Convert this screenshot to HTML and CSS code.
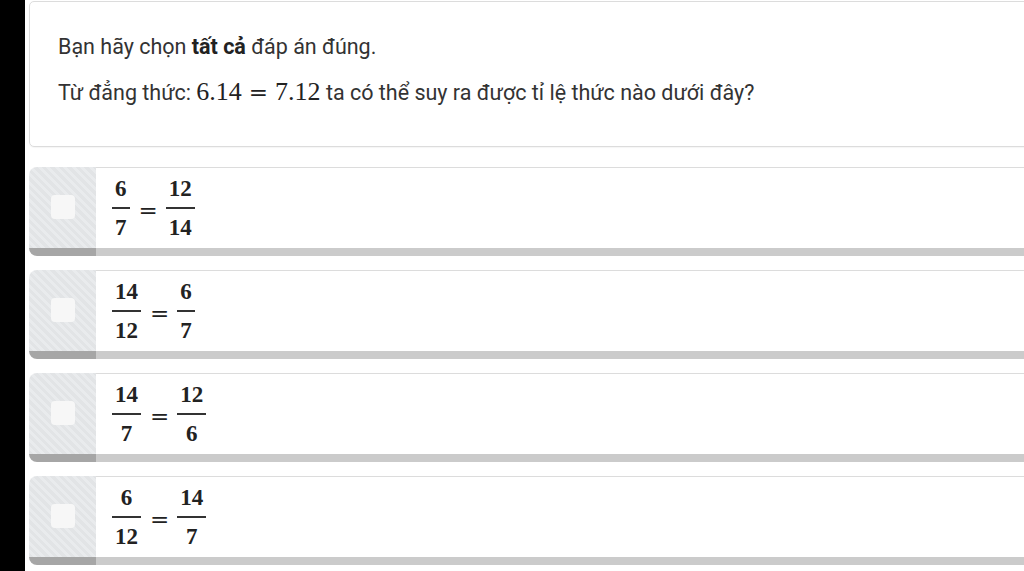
FILE: index.html
```html
<!DOCTYPE html>
<html lang="vi">
<head>
<meta charset="utf-8">
<link rel="stylesheet" href="styles.css">
</head>
<body>
<div class="sidebar"></div>
<main class="main">
  <section class="question">
    <p class="line1">Bạn hãy chọn <b>tất cả</b> đáp án đúng.</p>
    <p class="line2">Từ đẳng thức: <span class="math">6.14<span class="eq">=</span>7.12</span> ta có thể suy ra được tỉ lệ thức nào dưới đây?</p>
  </section>
  <ul class="options">
    <li class="option">
      <div class="panel"><span class="box"></span></div>
      <div class="content">
        <span class="frac"><span class="num">6</span><span class="bar"></span><span class="den">7</span></span>
        <span class="eq">=</span>
        <span class="frac"><span class="num">12</span><span class="bar"></span><span class="den">14</span></span>
      </div>
    </li>
    <li class="option">
      <div class="panel"><span class="box"></span></div>
      <div class="content">
        <span class="frac"><span class="num">14</span><span class="bar"></span><span class="den">12</span></span>
        <span class="eq">=</span>
        <span class="frac"><span class="num">6</span><span class="bar"></span><span class="den">7</span></span>
      </div>
    </li>
    <li class="option">
      <div class="panel"><span class="box"></span></div>
      <div class="content">
        <span class="frac"><span class="num">14</span><span class="bar"></span><span class="den">7</span></span>
        <span class="eq">=</span>
        <span class="frac"><span class="num">12</span><span class="bar"></span><span class="den">6</span></span>
      </div>
    </li>
    <li class="option">
      <div class="panel"><span class="box"></span></div>
      <div class="content">
        <span class="frac"><span class="num">6</span><span class="bar"></span><span class="den">12</span></span>
        <span class="eq">=</span>
        <span class="frac"><span class="num">14</span><span class="bar"></span><span class="den">7</span></span>
      </div>
    </li>
  </ul>
</main>
</body>
</html>
```

FILE: styles.css
```css
html, body {
  margin: 0;
  padding: 0;
  height: 100%;
}
body {
  display: flex;
  overflow: hidden;
  background: #fff;
  font-family: Roboto, "Liberation Sans", sans-serif;
  color: #333;
}
.sidebar {
  width: 25px;
  flex: none;
  background: #000;
}
.main {
  flex: none;
  width: 1020px;
  padding: 1px 0 0 4px;
}
.question {
  border: 1px solid #dcdcdc;
  border-radius: 5px;
  padding: 32px 28px 40px;
  font-size: 21.5px;
  box-shadow: 0 1px 1px rgba(0,0,0,0.04);
}
.question p {
  margin: 0;
  line-height: 26px;
}
.question .line2 {
  margin-top: 20px;
}
.question b {
  font-weight: 700;
  color: #222;
}
.math {
  font-family: "Liberation Serif", "DejaVu Serif", serif;
  font-size: 26px;
  line-height: 0;
  color: #222;
}
.math .eq {
  font-family: "DejaVu Serif", serif;
  font-size: 23px;
  padding: 0 7px;
}
.options {
  list-style: none;
  margin: 20px 0 0;
  padding: 0;
}
.option {
  display: flex;
  height: 89px;
  margin-bottom: 14px;
}
.panel {
  width: 67px;
  flex: none;
  border-radius: 8px 0 0 8px;
  border-bottom: 8px solid #a6a6a6;
  background: repeating-linear-gradient(45deg, #e2e4e6 0 3px, #e9ebed 3px 6px);
  display: flex;
  align-items: center;
  justify-content: center;
  padding-bottom: 2px;
}
.box {
  width: 24px;
  height: 24px;
  border-radius: 4px;
  background: #f7f7f7;
}
.content {
  flex: 1;
  border-top: 1px solid #dcdcdc;
  border-bottom: 8px solid #cbcbcb;
  display: flex;
  align-items: center;
  padding-left: 16px;
  font-family: "Liberation Serif", "DejaVu Serif", serif;
  font-size: 23px;
  font-weight: 700;
  color: #222;
}
.frac {
  display: inline-flex;
  flex-direction: column;
  align-items: center;
}
.num, .den {
  line-height: 1;
  padding: 0 3px;
}
.num {
  padding-bottom: 7px;
}
.den {
  padding-top: 7px;
}
.bar {
  align-self: stretch;
  height: 2px;
  background: #333;
}
.content .eq {
  font-family: "DejaVu Serif", serif;
  font-weight: 400;
  line-height: 1;
  padding: 0 8px 0 9px;
  margin-top: 5px;
}
```
